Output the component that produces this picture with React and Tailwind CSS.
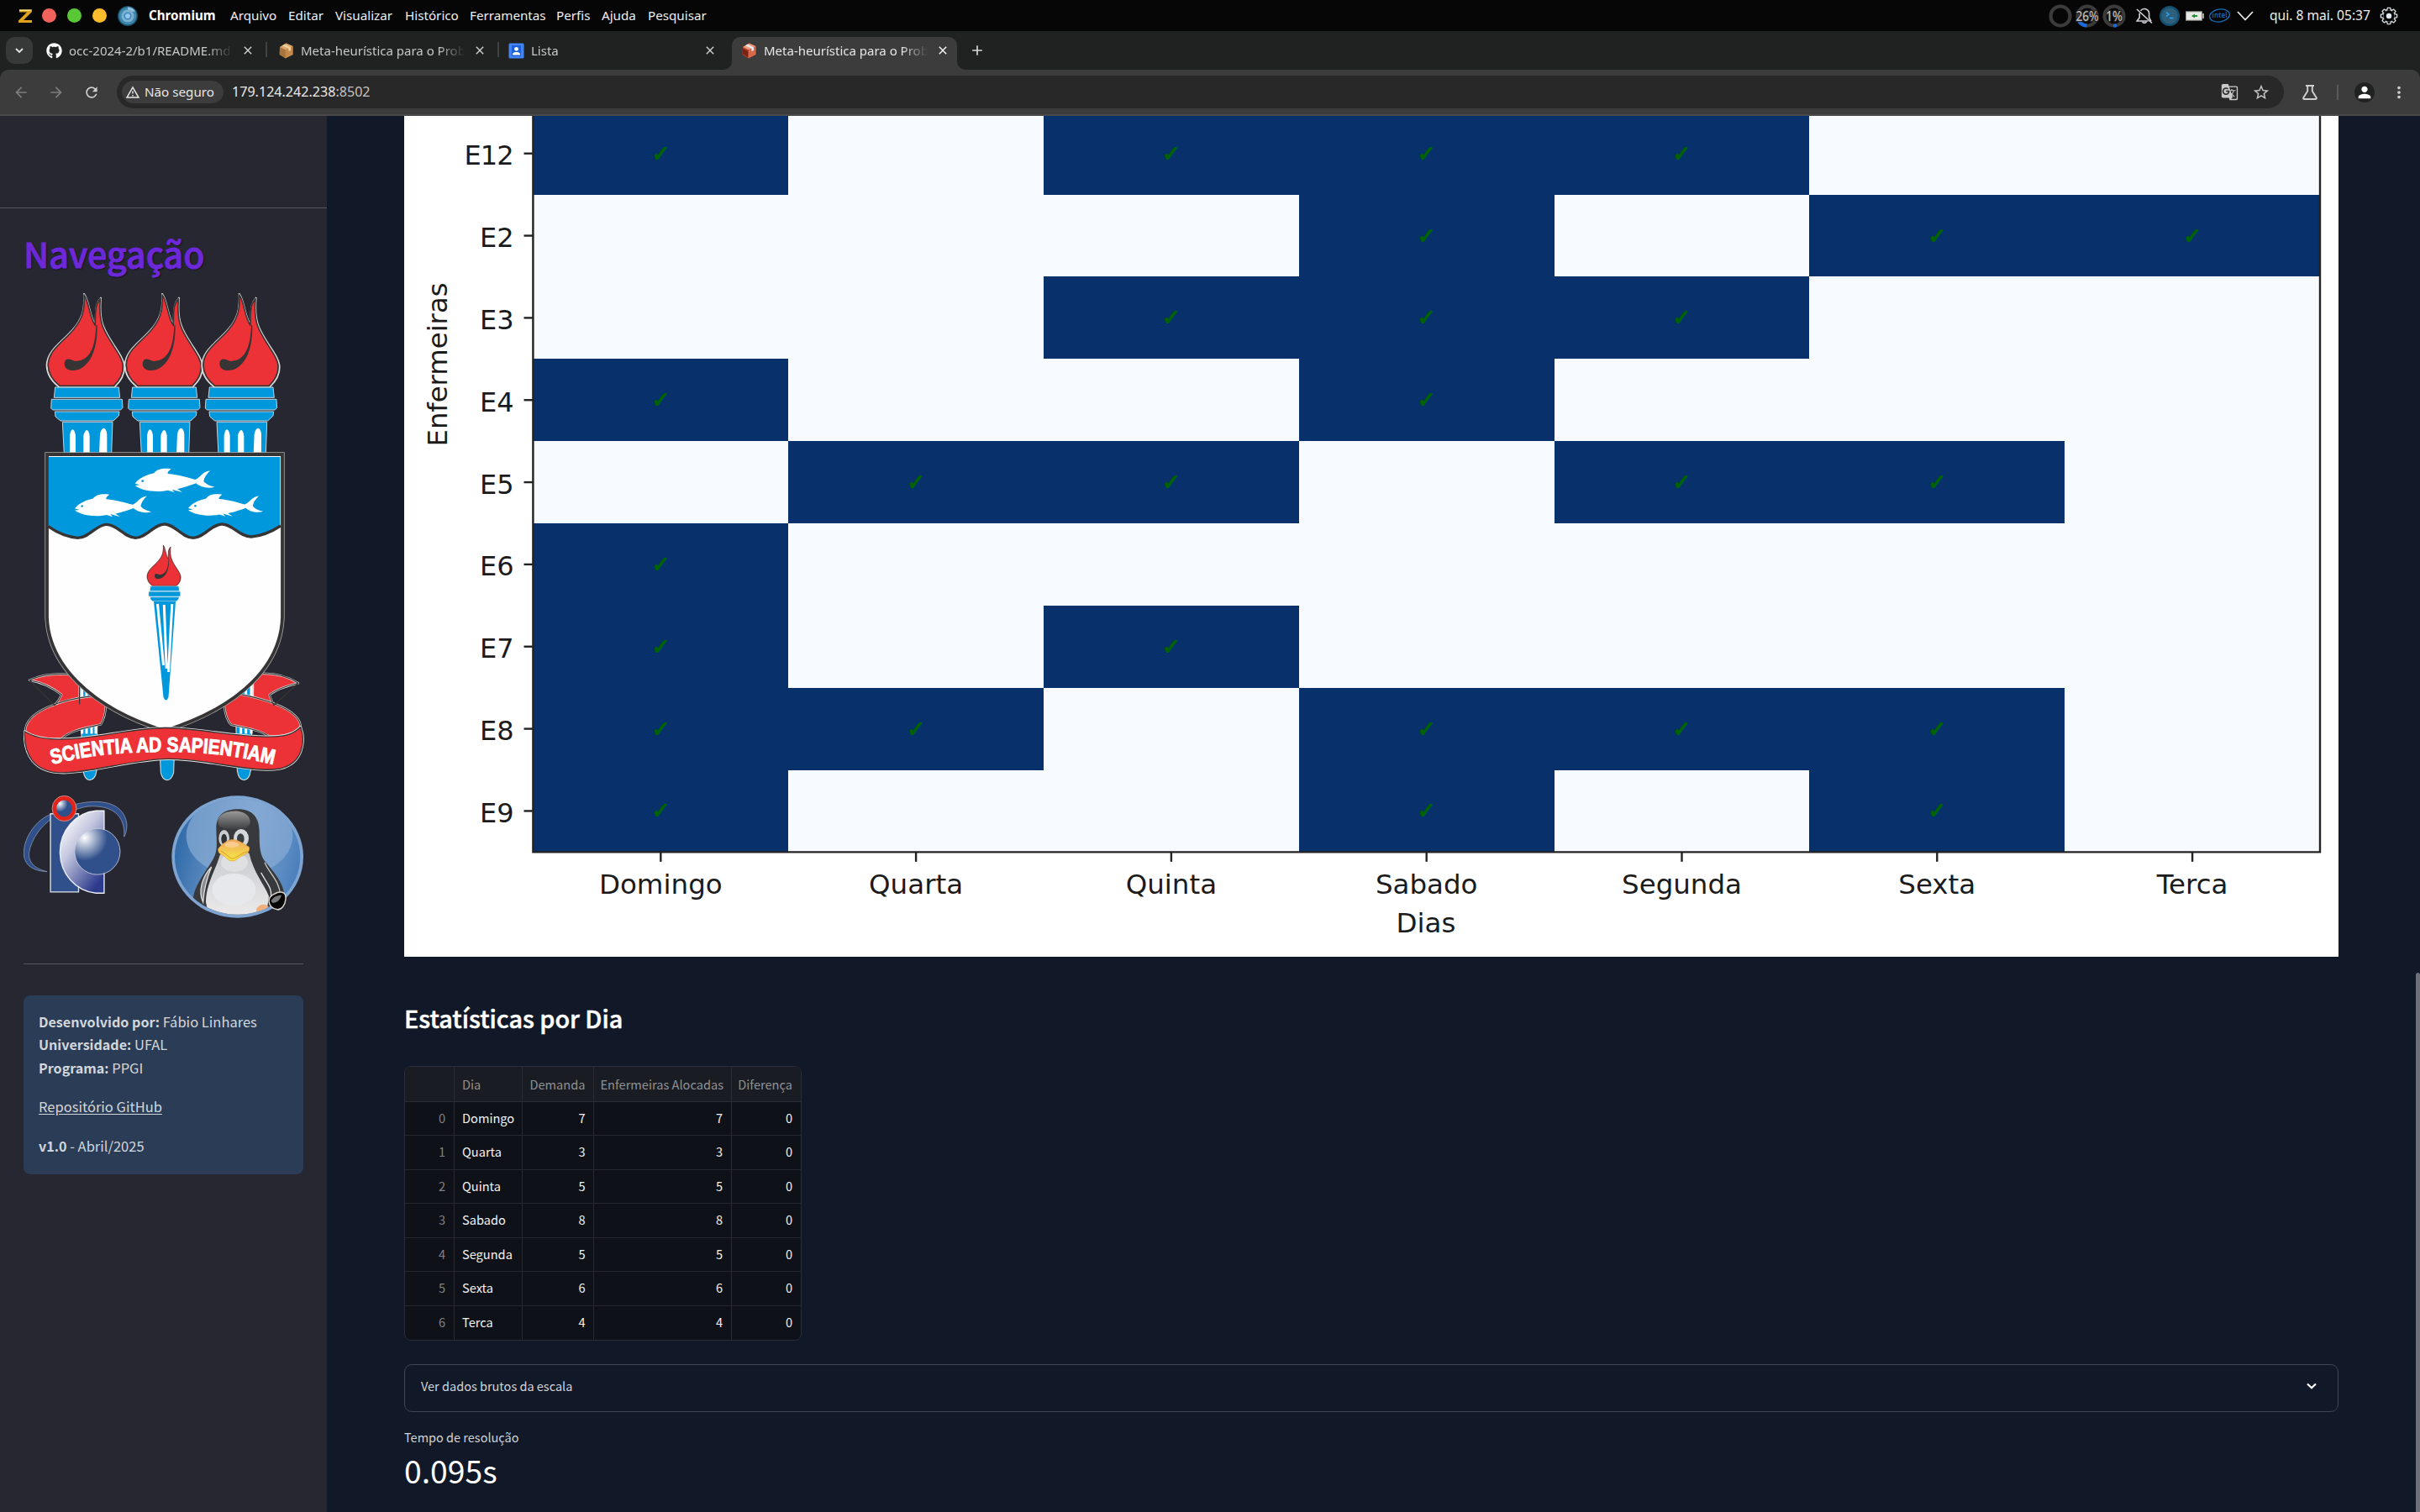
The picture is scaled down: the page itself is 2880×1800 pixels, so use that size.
import React from "react";
import { FaGithub } from "react-icons/fa";
import {
  MdGTranslate,
  MdStarBorder,
  MdPerson,
  MdMoreVert,
  MdClose,
  MdAdd,
  MdRefresh,
  MdArrowBack,
  MdArrowForward,
  MdOutlineWarningAmber,
} from "react-icons/md";

const UI = "font-['Noto_Sans',sans-serif]";
const BODY = "font-['Noto_Sans_CJK_SC',sans-serif]";

/* ---------- system menu bar ---------- */

const MENUS = [
  ["Arquivo", "w-[69px]"],
  ["Editar", "w-[56px]"],
  ["Visualizar", "w-[83px]"],
  ["Histórico", "w-[77px]"],
  ["Ferramentas", "w-[103px]"],
  ["Perfis", "w-[54px]"],
  ["Ajuda", "w-[55px]"],
  ["Pesquisar", "w-[80px]"],
];

function ChromiumIcon() {
  return (
    <svg width="24" height="24" viewBox="0 0 24 24">
      <circle cx="12" cy="12" r="12" fill="#1c4e66" />
      <circle cx="12" cy="12" r="10.6" fill="#3d86ad" />
      <path d="M12 1.4A10.6 10.6 0 0 1 21.2 6.8H12Z" fill="#8fc0dc" />
      <circle cx="12" cy="12" r="7.5" fill="#7db1d2" />
      <circle cx="12" cy="12" r="4.6" fill="#3f84c0" />
      <circle cx="12" cy="12" r="3" fill="#8fc6ea" />
    </svg>
  );
}

function Gauge({ label, dash }) {
  return (
    <svg width="32" height="30" viewBox="-16 -15 32 30">
      <circle r="11.5" fill="none" stroke="#3b3b3b" strokeWidth="4.2" />
      {dash}
      {label && (
        <text
          y="6"
          textAnchor="middle"
          fontFamily="Noto Sans"
          fontSize="15.5"
          fontWeight="500"
          fill="#b9b9b9"
          stroke="#222"
          strokeWidth="2.5"
          paintOrder="stroke"
          textLength={label === "26%" ? 27 : 20}
          lengthAdjust="spacingAndGlyphs"
        >
          {label}
        </text>
      )}
    </svg>
  );
}

function GearIcon() {
  const teeth = [0, 45, 90, 135, 180, 225, 270, 315];
  return (
    <svg width="22" height="22" viewBox="-11 -11 22 22">
      <g fill="none" stroke="#d3d8dc" strokeWidth="1.5">
        <circle r="7.4" />
      </g>
      {teeth.map((a) => (
        <g key={a} transform={`rotate(${a})`}>
          <path d="M-2.4 -6.6 L-1.6 -9.6 H1.6 L2.4 -6.6" fill="#090909" stroke="#d3d8dc" strokeWidth="1.4" />
        </g>
      ))}
      <circle r="3.2" fill="#e3e9f2" />
    </svg>
  );
}

function MenuBar() {
  return (
    <div className={`flex h-[37px] shrink-0 items-center bg-[#060606] text-[15.2px] leading-[37px] text-[#eeeeee] ${UI}`}>
      <svg className="ml-[22px]" width="17" height="18" viewBox="0 0 17 18">
        <path d="M1 1.5H16V4L6 14H16V17H0V14.5L10 4.5H1Z" fill="#e0a21c" />
        <path d="M1 1.5H16L14 3H1Z" fill="#ffe28a" />
      </svg>
      <div className="ml-[11px] flex gap-[13px]">
        <span className="size-[17px] rounded-full bg-[#f2625c]" />
        <span className="size-[17px] rounded-full bg-[#59c837]" />
        <span className="size-[17px] rounded-full bg-[#fdbc2e]" />
      </div>
      <div className="ml-[13px]">
        <ChromiumIcon />
      </div>
      <span className="ml-[13px] w-[97px] whitespace-nowrap text-[15.2px] font-bold text-white">Chromium</span>
      {MENUS.map(([m, w]) => (
        <span key={m} className={`shrink-0 whitespace-nowrap ${w}`}>
          {m}
        </span>
      ))}
      <div className="ml-auto flex h-[37px] items-center">
        <Gauge />
        <Gauge
          label="26%"
          dash={<path d="M-9.6 6.5A11.5 11.5 0 0 0 -0.5 11.5" fill="none" stroke="#1b6be0" strokeWidth="4.2" />}
        />
        <Gauge label="1%" dash={<circle cy="11.5" cx="1" r="2.2" fill="#1b6be0" />} />
        <svg className="ml-[10px]" width="20" height="22" viewBox="0 0 20 22">
          <g fill="none" stroke="#d0d0d4" strokeWidth="1.6">
            <path d="M5.5 4.8A5.6 5.6 0 0 1 15.6 8V13L18 17.5" />
            <path d="M4.2 7.5V13L1.2 17H14.5" />
            <path d="M7.5 17.5A2.6 2.6 0 0 0 12.5 17.5" />
            <path d="M1 3L19 19.5" />
          </g>
        </svg>
        <svg className="ml-[7px]" width="26" height="26" viewBox="0 0 26 26">
          <circle cx="13" cy="13" r="12" fill="#14506f" />
          <circle cx="13" cy="13" r="9.6" fill="#2d607c" />
          <path d="M9 8.5L12 11L9 13.5" fill="none" stroke="#35a3f0" strokeWidth="1.5" />
          <path d="M13 15.5H17.5" stroke="#35a3f0" strokeWidth="1.5" />
        </svg>
        <svg className="ml-[6px]" width="22" height="12" viewBox="0 0 22 12">
          <rect x="0.5" y="0.8" width="19" height="10.4" fill="#e8e8e6" stroke="#8a8a86" />
          <rect x="20" y="3" width="2" height="6" fill="#a5a59f" />
          <path d="M7 6L11 3.4V5H14V7H11V8.6Z" fill="#1d8f2c" />
        </svg>
        <svg className="ml-[5px]" width="27" height="19" viewBox="0 0 27 19">
          <ellipse cx="13.5" cy="9.5" rx="12" ry="7.4" transform="rotate(-9 13.5 9.5)" fill="none" stroke="#1572bb" strokeWidth="1.3" />
          <text x="4.6" y="12.2" fontFamily="Open Sans" fontWeight="600" fontSize="9" fill="#1572bb" textLength="18" lengthAdjust="spacingAndGlyphs">
            intel
          </text>
        </svg>
        <svg className="ml-[7px]" width="20" height="12" viewBox="0 0 20 12">
          <path d="M1 1L10 10.5L19 1" fill="none" stroke="#e8e8e8" strokeWidth="1.8" />
        </svg>
        <span className="ml-[19px] w-[130px] whitespace-nowrap text-[15.6px]">qui. 8 mai. 05:37</span>
        <div className="ml-[1px] mr-[26px]">
          <GearIcon />
        </div>
      </div>
    </div>
  );
}

/* ---------- browser chrome ---------- */

function BoxIcon({ red }) {
  return (
    <svg width="19" height="19" viewBox="0 0 19 19">
      <path d="M2 5L9.5 .5L17.5 4V14L8.5 18.5L1.5 14Z" fill={red ? "#a3402a" : "#a9733c"} />
      <path d="M2 5L9.5 .5L17.5 4L9 8.5Z" fill={red ? "#ee9a7a" : "#dba869"} />
      <path d="M9 8.5L17.5 4V14L8.5 18.5Z" fill={red ? "#d8694a" : "#c48a4c"} />
      <path d="M5 3.2L7.5 1.8L15 5.5V9L12.5 10V6.8Z" fill={red ? "#e3edf5" : "#ecd2a0"} />
      {red && <path d="M2 7L8 10V17L2 13Z" fill="#7d1f12" />}
    </svg>
  );
}

function ContactIcon() {
  return (
    <svg width="19" height="19" viewBox="0 0 19 19">
      <rect x=".5" y=".5" width="18" height="18" rx="1.5" fill="#4284f3" />
      <rect x="4" y="3" width="11" height="13" fill="#1c5fd8" />
      <circle cx="9.5" cy="7.3" r="2.4" fill="#fff" />
      <path d="M5 14.5C5 11.5 7 11 9.5 11S14 11.5 14 14.5Z" fill="#fff" />
    </svg>
  );
}

function Tab({ icon, title, active, className }) {
  return (
    <div className={`flex h-[32px] items-center ${className}`}>
      <span className="shrink-0">{icon}</span>
      <span
        className={`ml-[8px] w-[195px] whitespace-nowrap text-[15px] leading-[32px] [mask-image:linear-gradient(to_right,black_84%,transparent_100%)] ${
          active ? "text-[#e6e6e6]" : "text-[#c6c7c6]"
        }`}
      >
        {title}
      </span>
      <MdClose className={`ml-[10px] size-[16px] shrink-0 ${active ? "text-white" : "text-[#d4d4d4]"}`} />
    </div>
  );
}

function TabStrip() {
  return (
    <div className={`flex h-[46px] shrink-0 items-start bg-[#202221] ${UI}`}>
      <div className="ml-[7px] mt-[7px] flex h-[32px] w-[32px] items-center justify-center rounded-[10px] bg-[#373838]">
        <svg width="10" height="7" viewBox="0 0 10 7">
          <path d="M1 1L5 5L9 1" fill="none" stroke="#e2e2e2" strokeWidth="1.9" />
        </svg>
      </div>
      <Tab className="ml-[16px] mt-[7px] w-[260px]" title="occ-2024-2/b1/README.md" icon={<FaGithub className="size-[19px] text-white" />} />
      <span className="ml-[1px] mt-[13px] h-[18px] w-[2px] bg-[#404242]" />
      <Tab className="ml-[13px] mt-[7px] w-[261px]" title="Meta-heurística para o Prob" icon={<BoxIcon />} />
      <span className="mt-[13px] h-[18px] w-[2px] bg-[#404242]" />
      <Tab className="ml-[11px] mt-[7px] w-[256px]" title="Lista" icon={<ContactIcon />} />
      <div className="mt-[7px] flex h-[39px]">
        <div className="mt-[29px] size-[10px] bg-[#3c3c3c]">
          <div className="size-[10px] rounded-br-[10px] bg-[#202221]" />
        </div>
        <div className="h-[39px] w-[268px] rounded-t-[10px] bg-[#3c3c3c]">
          <Tab className="ml-[11px]" active title="Meta-heurística para o Prob" icon={<BoxIcon red />} />
        </div>
        <div className="mt-[29px] size-[10px] bg-[#3c3c3c]">
          <div className="size-[10px] rounded-bl-[10px] bg-[#202221]" />
        </div>
      </div>
      <MdAdd className="ml-[4px] mt-[13px] size-[20px] text-[#d8d8d8]" />
    </div>
  );
}

function Toolbar() {
  return (
    <div className="h-[55px] shrink-0 bg-[#202221]">
      <div className={`flex h-[55px] items-start rounded-t-[10px] border-b-2 border-[#494949] bg-[#3c3c3c] pt-[7px] ${UI}`}>
        <div className="flex h-[39px] items-center">
          <MdArrowBack className="ml-[15px] size-[20px] text-[#7c7c7c]" />
          <MdArrowForward className="ml-[22px] size-[20px] text-[#7c7c7c]" />
          <MdRefresh className="ml-[22px] size-[20px] text-[#d0d0d0]" />
        </div>
        <div className="ml-[20px] flex h-[39px] w-[2579px] items-center rounded-full bg-[#282828]">
          <div className="ml-[6px] flex h-[27px] w-[121px] items-center rounded-full bg-[#3c3c3c]">
            <MdOutlineWarningAmber className="ml-[4px] size-[18px] text-[#e6e6e6]" />
            <span className="ml-[5px] whitespace-nowrap text-[15.2px] leading-[27px] text-[#e6e6e6]">Não seguro</span>
          </div>
          <span className="ml-[10px] text-[16.1px] leading-[39px] text-[#e8e8e8]">
            179.124.242.238<span className="text-[#c2c2c2]">:8502</span>
          </span>
          <MdGTranslate className="ml-auto size-[21px] text-[#c9c9c9]" />
          <MdStarBorder className="ml-[16px] mr-[16px] size-[22px] text-[#c9c9c9]" />
        </div>
        <div className="flex h-[39px] items-center">
          <svg className="ml-[22px]" width="18" height="18" viewBox="0 0 18 18">
            <path d="M4 1H14M6.200 1V7.500L1.200 15.500Q.8 17 2.400 17H15.600Q17.200 17 16.800 15.500L11.800 7.500V1" fill="none" stroke="#cfcfcf" strokeWidth="1.900" />
          </svg>
          <span className="ml-[23px] h-[18px] w-[2px] bg-[#5a5a5a]" />
          <span className="ml-[19px] flex size-[24px] items-center justify-center rounded-full bg-[#202221]">
            <MdPerson className="size-[22px] text-white" />
          </span>
          <MdMoreVert className="ml-[18px] size-[22px] text-[#cfcfcf]" />
        </div>
      </div>
    </div>
  );
}

/* ---------- sidebar artwork ---------- */

const FLAME =
  "M300 300C318 322 319 380 341 411C341 340 345 332 360 314C352 400 372 430 408 485C430 518 444 540 444 562C444 590 430 612 410 631H210C185 612 168 590 167 555C168 500 225 470 262 425C290 392 304 360 300 300Z";
const SWIRL =
  "M343 412C340 490 322 538 270 540C256 537 232 520 230 550C232 582 275 575 292 564C328 542 348 490 347 412Z";

function TorchHead() {
  return (
    <g strokeLinejoin="round">
      <path d={FLAME} fill="#ed3237" stroke="#d9d9d9" strokeWidth="6" />
      <path d={FLAME} fill="#ed3237" stroke="#373435" strokeWidth="5" transform="translate(305 470) scale(.966 .982) translate(-305 -470)" />
      <path d={SWIRL} fill="#373435" />
    </g>
  );
}

function TorchRings() {
  return (
    <g fill="#0098dd" stroke="#c4d3dc" strokeWidth="3" strokeLinejoin="round">
      <path d="M197 633H424L428 670H193Z" />
      <path d="M184 676H436L438 706L431 714H188L182 708Z" />
      <path d="M196 720H426L424 735L405 753H216L198 738Z" />
    </g>
  );
}

function Fish({ dx, dy, s = 1 }) {
  return (
    <g transform={`translate(${dx} ${dy}) translate(482 977) scale(${s}) translate(-482 -977)`}>
      <path
        fill="#fff"
        d="M482 977C498 955 528 945 550 940C560 925 585 921 611 925C602 932 597 937 599 942C640 946 670 955 697 963C715 957 722 934 750 931C736 945 728 958 727 969C737 981 752 986 767 989C742 997 715 989 700 976C672 986 652 993 633 996L651 1008L614 998L623 1008L600 1001C560 1010 505 1003 482 984L500 982Z"
      />
      <circle cx="509" cy="968" r="4" fill="#0098dd" />
    </g>
  );
}

function Crest() {
  return (
    <svg className="ml-[28px] block" width="334" height="581" viewBox="28 349 334 581">
      <defs>
        <path id="motto" d="M62 910C108 898 150 895 197 895C245 895 285 900 329 911" />
      </defs>
      <g transform="translate(0 250) scale(.33333)">
        {[0, 276, 551].map((dx) => (
          <g key={dx} transform={`translate(${dx} 0)`}>
            <path d="M223 757H402L398 872H229Z" fill="#0098dd" stroke="#c4d3dc" strokeWidth="3" />
            <path d="M249 872V805Q253 784 259 784Q266 784 270 805V872ZM298 872V806Q303 786 310 786Q317 786 320 806V872ZM354 872L357 800Q362 779 370 779Q379 779 382 800V872Z" fill="#fff" />
            <TorchRings />
          </g>
        ))}
        {[0, 279, 554].map((dx) => (
          <g key={dx} transform={`translate(${dx} 0)`}>
            <TorchHead />
          </g>
        ))}
      </g>
      <g transform="translate(0 600) scale(.33333 .35075)">
        <g fill="#0098dd" stroke="#e4e4e4" strokeWidth="3">
          <path d="M281 590H350L345 905Q340 937 320 937Q302 937 297 905Z" />
          <path d="M571 850H622L620 912Q612 937 597 937Q580 937 574 912Z" />
          <path d="M905 590H838L847 905Q852 937 871 937Q890 937 895 905Z" />
        </g>
        <g stroke="#fff" strokeWidth="9">
          <path d="M293 610V780M309 620V780M327 640V780M342 650V780M897 590V780M878 610V780M860 620V780" />
        </g>
        <g fill="#ed3237" stroke="#e4e4e4" strokeWidth="7" strokeLinejoin="round">
          <path d="M105 598C150 578 210 575 255 579L283 606L284 680L195 683C207 670 214 660 220 647C190 625 150 605 105 598Z" />
          <path d="M1065 608C1020 580 970 572 915 576L903 600V665L978 683C970 668 966 660 962 648C985 630 1020 618 1065 608Z" />
          <path d="M330 652C230 662 90 700 90 772C130 800 180 800 220 796C250 768 300 762 360 748C372 730 377 710 378 682Z" />
          <path d="M848 643C960 665 1070 700 1073 755C1040 790 990 790 960 788C930 768 880 760 825 749C810 735 803 710 800 680Z" />
        </g>
        <g fill="none" stroke="#373435" strokeWidth="3.5" strokeLinejoin="round">
          <path d="M105 598C150 578 210 575 255 579L283 606L284 680M195 683C207 670 214 660 220 647C190 625 150 605 105 598Z" />
          <path d="M1065 608C1020 580 970 572 915 576M978 683C970 668 966 660 962 648C985 630 1020 618 1065 608Z" />
          <path d="M330 652C230 662 90 700 90 772C130 800 180 800 220 796C250 768 300 762 360 748C372 730 377 710 378 682" />
          <path d="M848 643C960 665 1070 700 1073 755C1040 790 990 790 960 788C930 768 880 760 825 749C810 735 803 710 800 680" />
        </g>
      </g>
      <path
        d="M56 541H336V735C334 790 290 840 196 870C106 842 58 790 56 735Z"
        fill="#fefefe"
        stroke="#a9a9a9"
        strokeWidth="5.4"
      />
      <path d="M56 541H336V735C334 790 290 840 196 870C106 842 58 790 56 735Z" fill="#fefefe" stroke="#373435" strokeWidth="3.8" />
      <g transform="translate(0 250) scale(.33333)">
        <path
          d="M174 882H1000V1128C960 1155 925 1165 897 1168C855 1168 830 1122 793 1122C755 1122 728 1171 690 1171C650 1171 625 1122 587 1122C550 1122 522 1171 484 1171C445 1171 420 1123 380 1123C345 1123 318 1171 278 1171C240 1168 205 1153 174 1130Z"
          fill="#0098dd"
        />
        <path
          d="M1002 1128C960 1155 925 1165 897 1167C855 1167 830 1122 793 1122C755 1122 728 1171 690 1171C650 1171 625 1122 587 1122C550 1122 522 1171 484 1171C445 1171 420 1123 380 1123C345 1123 318 1171 278 1171C240 1168 205 1153 172 1130"
          fill="none"
          stroke="#373435"
          strokeWidth="10"
        />
        <Fish dx={0} dy={0} />
        <Fish dx={-215} dy={89} s={0.96} />
        <Fish dx={190} dy={88} s={0.94} />
      </g>
      <g transform="translate(174.3 648.4) scale(.148) translate(-165 -298)">
        <TorchHead />
        <TorchRings />
      </g>
      <path d="M183 716H209L200.500 830Q197.500 837 194.500 830Z" fill="#0098dd" />
      <path d="M187.500 719L194.500 792M195.300 720L198.200 796M204.800 719L200.500 800" fill="none" stroke="#fff" strokeWidth="3" />
      <g transform="translate(0 600) scale(.33333 .35075)" strokeLinejoin="round">
        <path
          d="M88 772C150 812 270 800 400 780C500 765 560 760 590 760C700 760 830 790 960 790C1020 790 1050 780 1073 757C1090 800 1085 880 1000 898C900 915 750 865 600 865C480 865 330 912 225 912C120 912 85 850 88 772Z"
          fill="#ed3237"
          stroke="#e4e4e4"
          strokeWidth="9"
        />
        <path
          d="M88 772C150 812 270 800 400 780C500 765 560 760 590 760C700 760 830 790 960 790C1020 790 1050 780 1073 757C1090 800 1085 880 1000 898C900 915 750 865 600 865C480 865 330 912 225 912C120 912 85 850 88 772Z"
          fill="#ed3237"
          stroke="#373435"
          strokeWidth="4"
        />
      </g>
      <text fontFamily="Liberation Sans" fontWeight="700" fontSize="25" fill="#fff" stroke="#fff" strokeWidth="1" textLength="266" lengthAdjust="spacingAndGlyphs">
        <textPath href="#motto" textLength="266" lengthAdjust="spacingAndGlyphs">
          SCIENTIA AD SAPIENTIAM
        </textPath>
      </text>
    </svg>
  );
}

function ComputingLogo() {
  return (
    <svg width="124" height="117" viewBox="84 988 371 333" preserveAspectRatio="none">
      <defs>
        <linearGradient id="cArc" x1="0" y1="0" x2=".7" y2="1">
          <stop offset=".1" stopColor="#ffffff" />
          <stop offset=".45" stopColor="#c3c6df" />
          <stop offset="1" stopColor="#2b3a8b" />
        </linearGradient>
        <radialGradient id="ball" cx=".22" cy=".2" r=".5">
          <stop offset="0" stopColor="#ffffff" />
          <stop offset="1" stopColor="#30508c" />
        </radialGradient>
      </defs>
      <path d="M190 1048C125 1068 78 1140 86 1195C95 1238 140 1245 168 1246C120 1235 100 1212 104 1180C112 1135 150 1085 190 1064Z" fill="#30508c" stroke="#9aa5bd" strokeWidth="2" />
      <path d="M272 1017C350 1000 440 1005 452 1085C452 1108 447 1120 442 1128C446 1080 425 1030 345 1025C315 1022 295 1028 272 1035Z" fill="#30508c" stroke="#9aa5bd" strokeWidth="2" />
      <path d="M180 1050H280V1315H180Z" fill="#30508c" stroke="#e0e4ec" strokeWidth="4" />
      <path d="M371 1040H342A140 140 0 0 0 342 1319H371Z" fill="url(#cArc)" stroke="#eef0f6" strokeWidth="4" />
      <ellipse cx="347" cy="1178" rx="81" ry="78" fill="url(#ball)" stroke="#c6cbdc" strokeWidth="2.500" />
      <circle cx="229" cy="1032" r="43" fill="#e2231a" stroke="#c9b9b9" strokeWidth="2" />
      <circle cx="229" cy="1032" r="28" fill="url(#ball)" />
    </svg>
  );
}

function TuxLogo() {
  return (
    <svg width="157" height="146" viewBox="612 988 471 416" preserveAspectRatio="none">
      <defs>
        <linearGradient id="sky" x1="0" y1=".4" x2="1" y2=".6">
          <stop offset="0" stopColor="#2f6aa8" />
          <stop offset=".55" stopColor="#7fa5d2" />
          <stop offset="1" stopColor="#4a7fbb" />
        </linearGradient>
        <linearGradient id="head" x1="0" y1="0" x2="0" y2="1">
          <stop offset="0" stopColor="#9a9a9a" />
          <stop offset="1" stopColor="#3a3b3e" />
        </linearGradient>
        <linearGradient id="belly" x1="0" y1="0" x2="0" y2="1">
          <stop offset="0" stopColor="#c6c8cc" />
          <stop offset="1" stopColor="#eceaea" />
        </linearGradient>
        <linearGradient id="beak" x1="0" y1="0" x2="0" y2="1">
          <stop offset="0" stopColor="#f2a763" />
          <stop offset="1" stopColor="#f3ea3f" />
        </linearGradient>
        <clipPath id="disc">
          <ellipse cx="848" cy="1196" rx="224" ry="196" />
        </clipPath>
      </defs>
      <ellipse cx="848" cy="1196" rx="235" ry="207" fill="#7ea4d1" />
      <ellipse cx="848" cy="1196" rx="224" ry="196" fill="url(#sky)" />
      <g clipPath="url(#disc)">
        <ellipse cx="855" cy="1125" rx="190" ry="135" fill="#86a9d3" opacity=".75" />
        <path
          d="M772 1100C772 1050 805 1034 850 1034C900 1034 925 1060 926 1110C926 1160 928 1190 945 1210C985 1255 1015 1290 1015 1330C1000 1380 930 1400 850 1400C770 1400 700 1370 690 1335C695 1290 740 1240 760 1205C780 1175 772 1140 772 1100Z"
          fill="#37393d"
        />
        <path d="M778 1080C778 1050 810 1041 845 1041C880 1044 895 1062 893 1082C885 1102 860 1106 835 1104C800 1102 780 1098 778 1080Z" fill="url(#head)" />
        <path
          d="M785 1190C770 1240 735 1290 735 1350L745 1395H950L960 1330C945 1290 905 1250 890 1185C860 1160 810 1160 785 1190Z"
          fill="url(#belly)"
        />
        <path d="M755 1230C725 1260 705 1310 725 1350C728 1310 735 1275 755 1230Z" fill="#8a8b8e" stroke="#ddd" strokeWidth="4" />
        <path d="M945 1215C960 1250 1000 1280 1000 1325" fill="none" stroke="#c9c9c9" strokeWidth="4" />
        <path d="M932 1250C955 1290 970 1300 968 1330" fill="none" stroke="#e3e3e3" strokeWidth="4" />
        <ellipse cx="835" cy="1307" rx="78" ry="54" fill="#e6e8ec" />
        <ellipse cx="837" cy="1215" rx="48" ry="32" fill="#dfe0e2" />
        <ellipse cx="940" cy="1378" rx="25" ry="20" fill="#f0b07c" />
      </g>
      <ellipse cx="800" cy="1133" rx="19" ry="28" fill="#c9ccd0" />
      <ellipse cx="861" cy="1133" rx="27" ry="31" fill="#d5d8db" />
      <ellipse cx="800" cy="1136" rx="10" ry="18" fill="#2f3236" />
      <ellipse cx="859" cy="1135" rx="13" ry="18" fill="#3a3d42" />
      <path
        d="M780 1168C795 1150 815 1138 830 1138C850 1138 870 1152 889 1163C892 1175 885 1185 870 1190C850 1198 845 1210 828 1210C812 1210 808 1195 792 1189C780 1184 778 1176 780 1168Z"
        fill="url(#beak)"
        stroke="#e8a33c"
        strokeWidth="2.500"
      />
      <path d="M788 1176C810 1188 820 1202 830 1202C842 1202 855 1186 884 1178" fill="none" stroke="#d98a2c" strokeWidth="2.500" />
      <ellipse cx="828" cy="1155" rx="26" ry="10" fill="#fbd3a0" opacity=".75" />
      <path
        d="M960 1347C958 1336 970 1325 990 1317C1010 1312 1022 1320 1020 1340C1018 1360 1005 1376 990 1375C972 1372 962 1362 960 1347Z"
        fill="#050505"
        stroke="#d8d3c8"
        strokeWidth="4.500"
      />
      <path d="M968 1345C975 1332 990 1326 1005 1326C1000 1342 990 1352 972 1352Z" fill="#77787a" />
    </svg>
  );
}

function Sidebar() {
  return (
    <aside className={`flex w-[389px] shrink-0 flex-col bg-[#262730] ${BODY}`}>
      <div className="h-[110px] shrink-0 border-b border-[#53545c]" />
      <h1 className="ml-[28px] mt-[23px] h-[60px] whitespace-nowrap text-[41.2px] font-medium leading-[60px] text-[#6d28d9] [-webkit-text-stroke:1px_#6d28d9] [text-shadow:1px_1px_2px_rgba(0,0,0,0.7)]">
        Navegação
      </h1>
      <div className="mt-[18px]">
        <Crest />
      </div>
      <div className="mx-[28px] mt-[17px] flex h-[146px] items-start justify-between">
        <ComputingLogo />
        <TuxLogo />
      </div>
      <div className="mx-[28px] mt-[54px] h-px bg-[#53545c]" />
      <div className="mx-[28px] mt-[37px] h-[213px] rounded-[8px] bg-[#2b3d56] pl-[18px] pt-[18px] text-[16.5px] leading-[27.4px] text-[#d2d7dd]">
        <p>
          <b className="text-[16.1px] font-bold">Desenvolvido por:</b> Fábio Linhares
        </p>
        <p>
          <b className="text-[16.1px] font-bold">Universidade:</b> UFAL
        </p>
        <p>
          <b className="text-[16.1px] font-bold">Programa:</b> PPGI
        </p>
        <p className="mt-[19px] underline underline-offset-[2px]">Repositório GitHub</p>
        <p className="mt-[19px]">
          <b className="text-[16.1px] font-bold">v1.0</b> - Abril/2025
        </p>
      </div>
    </aside>
  );
}

/* ---------- schedule heat map ---------- */

const DAYS = ["Domingo", "Quarta", "Quinta", "Sabado", "Segunda", "Sexta", "Terca"];
const ROWS = [
  ["E12", [0, 2, 3, 4]],
  ["E2", [3, 5, 6]],
  ["E3", [2, 3, 4]],
  ["E4", [0, 3]],
  ["E5", [1, 2, 4, 5]],
  ["E6", [0]],
  ["E7", [0, 2]],
  ["E8", [0, 1, 3, 4, 5]],
  ["E9", [0, 3, 5]],
];
const X0 = 153.4;
const CW = 303.8;
const RH = 97.84;
const Y0 = -4.2;
const YB = Y0 + RH * 9;

function HeatMap() {
  return (
    <svg className="block bg-white" width="2302" height="1001" viewBox="0 0 2302 1001" fontFamily="DejaVu Sans" fill="#1b1b1b">
      <rect x={X0} y={Y0} width={CW * 7} height={RH * 9} fill="#f7fbff" />
      <g shapeRendering="crispEdges" fill="#08306b">
        {ROWS.map(([name, days], r) =>
          days.map((d) => <rect key={name + d} x={X0 + d * CW} y={Y0 + r * RH} width={CW} height={RH} />)
        )}
      </g>
      {ROWS.map(([name, days], r) => (
        <g key={name}>
          {days.map((d) => (
            <text
              key={d}
              x={X0 + (d + 0.5) * CW}
              y={Y0 + (r + 0.5) * RH + 9}
              textAnchor="middle"
              fontSize="26"
              fill="#006400"
              stroke="#006400"
              strokeWidth="1.2"
            >
              ✓
            </text>
          ))}
          <path d={`M142.500 ${Y0 + (r + 0.5) * RH}H${X0}`} stroke="#222" strokeWidth="2.400" />
          <text x="130.500" y={Y0 + (r + 0.5) * RH + 13.5} textAnchor="end" fontSize="32" textLength={name === "E12" ? 59 : undefined}>
            {name}
          </text>
        </g>
      ))}
      <path d={`M${X0} 0V${YB}H${X0 + CW * 7}V0`} fill="none" stroke="#222" strokeWidth="2.400" />
      {DAYS.map((d, i) => (
        <g key={d}>
          <path d={`M${X0 + (i + 0.5) * CW} ${YB}V${YB + 11.5}`} stroke="#222" strokeWidth="2.400" />
          <text x={X0 + (i + 0.5) * CW} y="925.500" textAnchor="middle" fontSize="32.500">
            {d}
          </text>
        </g>
      ))}
      <text x="1216" y="971.500" textAnchor="middle" fontSize="32.500">
        Dias
      </text>
      <text transform="translate(51 296) rotate(-90)" textAnchor="middle" fontSize="32.300">
        Enfermeiras
      </text>
    </svg>
  );
}

/* ---------- statistics table ---------- */

const STATS = [
  ["Domingo", 7],
  ["Quarta", 3],
  ["Quinta", 5],
  ["Sabado", 8],
  ["Segunda", 5],
  ["Sexta", 6],
  ["Terca", 4],
];
const COLS = "grid grid-cols-[59px_81px_84.500px_164.500px_82px]";
const CELL = "border-r border-[#292b30] last:border-r-0";

function StatsTable() {
  return (
    <div className="w-[473px] overflow-hidden rounded-[8px] border border-[#292e3a] bg-[#0e1117] text-[14.6px] text-[#f2f2f3]">
      <div className={`${COLS} h-[42px] border-b border-[#2b2d34] bg-[#1a1c24] leading-[41px] text-[#8f9094]`}>
        <span className={CELL} />
        <span className={`${CELL} pl-[9px]`}>Dia</span>
        <span className={`${CELL} pr-[9px] text-right`}>Demanda</span>
        <span className={`${CELL} whitespace-nowrap pr-[9px] text-right`}>Enfermeiras Alocadas</span>
        <span className={`${CELL} pr-[10px] text-right`}>Diferença</span>
      </div>
      {STATS.map(([day, n], i) => (
        <div key={day} className={`${COLS} h-[40.430px] border-b border-[#25272c] leading-[37.500px] last:border-b-0`}>
          <span className={`${CELL} pr-[10px] text-right text-[#808186]`}>{i}</span>
          <span className={`${CELL} pl-[9px]`}>{day}</span>
          <span className={`${CELL} pr-[9px] text-right`}>{n}</span>
          <span className={`${CELL} pr-[10px] text-right`}>{n}</span>
          <span className={`${CELL} pr-[10px] text-right`}>0</span>
        </div>
      ))}
    </div>
  );
}

export default function App() {
  return (
    <div className="flex h-[1800px] w-[2880px] flex-col overflow-hidden bg-[#111827]">
      <MenuBar />
      <TabStrip />
      <Toolbar />
      <div className="flex min-h-0 flex-1">
        <Sidebar />
        <main className={`ml-[92px] flex w-[2302px] shrink-0 flex-col ${BODY}`}>
          <HeatMap />
          <h2 className="mt-[51px] h-[43px] whitespace-nowrap text-[28.8px] font-medium leading-[43px] text-white [-webkit-text-stroke:0.5px_white]">
            Estatísticas por Dia
          </h2>
          <div className="mt-[36px]">
            <StatsTable />
          </div>
          <div className="mt-[28px] flex h-[57px] shrink-0 items-center rounded-[9px] border border-[#3e4451] pl-[19px] pr-[25px] text-[14.500px] text-[#d0d3d8]">
            <span className="-mt-[5px] leading-[50px]">Ver dados brutos da escala</span>
            <svg className="-mt-[4px] ml-auto" width="12" height="8" viewBox="0 0 12 8">
              <path d="M1 1.500L6 6.300L11 1.500" fill="none" stroke="#fff" strokeWidth="2.200" />
            </svg>
          </div>
          <p className="mt-[18px] h-[24px] text-[14.500px] leading-[24px] text-[#d0d3d8]">Tempo de resolução</p>
          <p className="-mt-[3px] h-[60px] text-[37.300px] leading-[60px] text-white">0.095s</p>
        </main>
        <div className="ml-auto mt-[1020px] w-[5px] rounded-t-[3px] bg-[#6d7079]" />
      </div>
    </div>
  );
}
